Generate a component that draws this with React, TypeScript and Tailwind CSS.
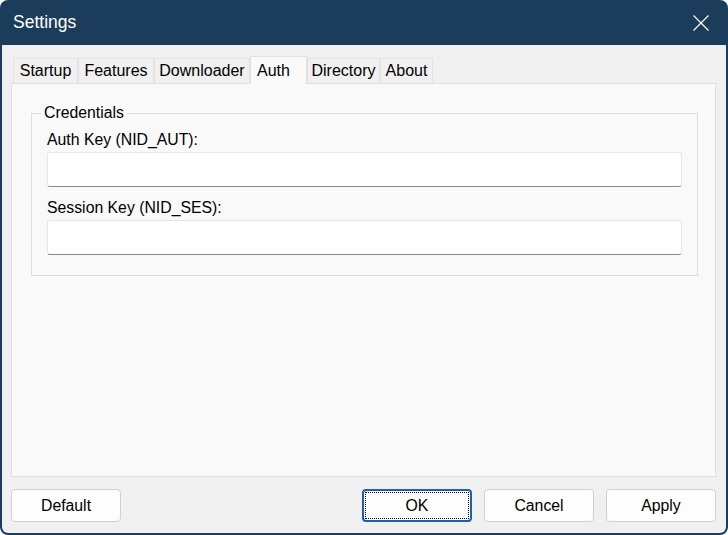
const tabs = [
    { label: 'Startup', w: 'w-[65px]' },
    { label: 'Features', w: 'w-[76px]' },
    { label: 'Downloader', w: 'w-[96px]' },
    { label: 'Auth', w: 'w-[57px]', active: true },
    { label: 'Directory', w: 'w-[73px]' },
    { label: 'About', w: 'w-[53px]' },
];

const font = { fontFamily: '"Liberation Sans", Arial, sans-serif' };

function Field({ label }: { label: string }) {
    return (
        <div className="flex flex-col">
            <label className="text-[15.8px] leading-[20px] text-black mb-[2px]">{label}</label>
            <div className="h-[35px] bg-white border border-[#e6e6e6] border-b-[#8a8a8a] rounded-[3px]" />
        </div>
    );
}

function Button({ label, focused }: { label: string; focused?: boolean }) {
    return (
        <button
            className={`w-[110px] h-[33px] rounded-[4px] bg-[#fdfdfd] text-[15.8px] text-black flex items-center justify-center ${focused ? 'border-2 border-[#1a5fb4] p-[1px]' : 'border border-[#d0d0d0]'}`}
        >
            {focused ? (
                <span className="w-full h-full border border-dotted border-black flex items-center justify-center">{label}</span>
            ) : (
                label
            )}
        </button>
    );
}

export default function App() {
    return (
        <div className="w-[728px] h-[535px] bg-white" style={font}>
            <div className="w-full h-full bg-[#1b3d5b] rounded-[8px] flex flex-col px-[2px] pb-[2px]">
                {/* Title bar */}
                <div className="h-[45px] flex items-center justify-between pl-[11px] pr-[17px]">
                    <span className="text-white text-[17.5px]">Settings</span>
                    <svg width="16" height="16" viewBox="0 0 16 16" className="mt-px">
                        <path d="M0.5 0.5 L15.5 15.5 M15.5 0.5 L0.5 15.5" stroke="white" strokeWidth="1.2" fill="none" />
                    </svg>
                </div>

                {/* Client */}
                <div className="flex-1 bg-[#f0f0f0] rounded-b-[6px] flex flex-col pl-[9px] pr-[10px]">
                    {/* Tabs */}
                    <div className="flex items-end h-[38px] pl-[2px] relative z-10">
                        {tabs.map((t) =>
                            t.active ? (
                                <div
                                    key={t.label}
                                    className={`${t.w} h-[28px] -mb-px bg-[#f9f9f9] border border-b-0 border-[#e0e0e0] text-[16px] text-black flex items-start pl-[6px] pt-[2px]`}
                                >
                                    {t.label}
                                </div>
                            ) : (
                                <div
                                    key={t.label}
                                    className={`${t.w} h-[25px] bg-[#f0f0f0] border border-b-0 border-[#e3e3e3] text-[16px] text-black flex items-center justify-center`}
                                >
                                    {t.label}
                                </div>
                            )
                        )}
                    </div>

                    {/* Panel */}
                    <div className="h-[394px] bg-[#f9f9f9] border border-[#e0e0e0] pl-[19px] pr-[17px] pt-[29px]">
                        <div className="relative border border-[#dcdcdc] pt-[16px] pb-[20px] pl-[15px] pr-[15px] flex flex-col gap-[11px]">
                            <span className="absolute -top-[11px] left-[9px] px-[3px] bg-[#f9f9f9] text-[15.8px] leading-[20px] text-black">
                                Credentials
                            </span>
                            <Field label="Auth Key (NID_AUT):" />
                            <Field label="Session Key (NID_SES):" />
                        </div>
                    </div>

                    {/* Buttons */}
                    <div className="flex items-center mt-[12px]">
                        <Button label="Default" />
                        <div className="flex-1" />
                        <div className="flex gap-[12px]">
                            <Button label="OK" focused />
                            <Button label="Cancel" />
                            <Button label="Apply" />
                        </div>
                    </div>
                </div>
            </div>
        </div>
    );
}
